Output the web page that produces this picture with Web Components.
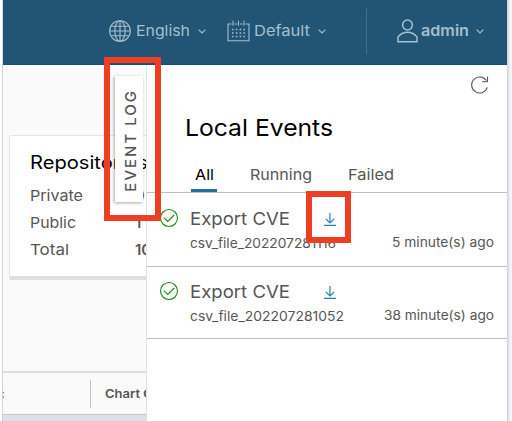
<!DOCTYPE html>
<html lang="en"><head><meta charset="utf-8"><title>Event Log</title>
<style>html,body{margin:0;width:512px;height:421px;overflow:hidden;background:#fff}body{font-family:Inter,"Liberation Sans",sans-serif;color:#565656}</style>
</head><body>
<app-shell></app-shell>
<script>
const define = (name, html, init) => customElements.define(name, class extends HTMLElement {
  connectedCallback() {
    if (this.shadowRoot) return;
    const t = document.createElement('template');
    t.innerHTML = typeof html === 'function' ? html(this) : html;
    this.attachShadow({mode:'open'}).append(t.content.cloneNode(true));
    if (init) init(this);
  }
});

// One line of text stretched horizontally to fill the width in "w".
define('fit-text', el => `<style>:host{display:block;white-space:nowrap;flex:none;width:${el.getAttribute('w')}px}span{display:inline-block;transform-origin:0 50%}</style><span><slot></slot></span>`, el => {
  const s = el.shadowRoot.querySelector('span');
  s.style.transform = `scaleX(${(+el.getAttribute('w') + 1) / s.getBoundingClientRect().width})`;
});

const icons = {
  globe: [22,22,'<circle cx="11" cy="11" r="10.3"/><ellipse cx="11" cy="11" rx="5.2" ry="10.3"/><path d="M11 .7v20.6M.7 11h20.6M2.3 6.3h17.4M2.3 15.7h17.4"/>'],
  calendar: [23,22,'<path d="M4.5 4H1v16.8h21V4h-3.500M7.500 4h2.500M13 4h2.500M6 .8v5M11.500 .8v5M17 .8v5"/><path stroke-dasharray="1.500 2.300" stroke-width="1.500" d="M5 9.500h13.500M5 13h13.500M5 16.500h13.500"/>'],
  user: [21,24,'<circle cx="10.500" cy="6" r="4.900"/><path d="M1 22.700V18c2.300-3 5.600-4.800 9.500-4.800s7.200 1.800 9.500 4.800v4.700z"/>'],
  caret: [8,5,'<path d="M.6.6 4 4 7.400.6"/>'],
  refresh: [18,18,'<path d="M16.300 11.300A8 8 0 1 1 15.300 4.500M16.500 .5v5.300h-5.300"/>'],
  check: [20,20,'<circle cx="10" cy="10" r="8.500"/><path d="M4.800 9.700 8.700 13.500 15.200 7"/>'],
  download: [12,13,'<path d="M6 0v9.800M1.800 5.800 6 10l4.200-4.200M0 12.400h12"/>']
};
define('ui-icon', el => {
  const [w,h,p] = icons[el.getAttribute('name')];
  return `<style>:host{display:block;flex:none;width:${w}px;height:${h}px}svg{display:block;fill:none;stroke:currentColor;stroke-width:var(--stroke,1.100)}</style><svg width="${w}" height="${h}" viewBox="0 0 ${w} ${h}">${p}</svg>`;
});

define('top-bar', `<style>
:host{display:flex;align-items:center;box-sizing:border-box;height:65px;padding:0 0 2px 106px;background:#225475;border-bottom:1px solid #0f5073;color:#a6bfcd;font-size:15px;line-height:22px}
.sep{width:1px;height:45px;background:#467089;margin-left:40px}
ui-icon[name=user]{--stroke:1.500}
</style>
<ui-icon name="globe"></ui-icon><fit-text w="53" style="margin-left:5px">English</fit-text><ui-icon name="caret" style="margin-left:9px"></ui-icon>
<ui-icon name="calendar" style="margin-left:21px"></ui-icon><fit-text w="55" style="margin-left:4px">Default</fit-text><ui-icon name="caret" style="margin-left:9px"></ui-icon>
<div class="sep"></div><ui-icon name="user" style="margin-left:30px"></ui-icon><fit-text w="47" style="margin-left:3px;font-weight:600">admin</fit-text><ui-icon name="caret" style="margin-left:8px"></ui-icon>`);

define('repo-card', `<style>
:host{display:block;box-sizing:border-box;width:160px;height:145px;padding:14px 0 0 20px;background:#fff;border:1px solid #e4e4e4;border-bottom:4px solid #dedede;border-radius:3px}
.title{font-size:18px;line-height:26px;color:#000}
.row{display:grid;grid-template-columns:105px 1fr;font-size:15px;line-height:27px}
.title + .row{margin-top:6px}b{font-weight:600}
</style><div class="title"><fit-text w="117">Repositories</fit-text></div>
<div class="row"><fit-text w="52">Private</fit-text><b>9</b></div>
<div class="row"><fit-text w="45">Public</fit-text><b>1</b></div>
<div class="row"><fit-text w="38">Total</fit-text><b>10</b></div>`);

define('column-heads', `<style>
:host{display:flex;align-items:center;box-sizing:border-box;height:44px;border-top:2px solid #dcdcdc;border-bottom:1px solid #c6c8ca;font-size:12px;font-weight:600;line-height:18px;white-space:nowrap}
span{flex:none;width:88px;margin-left:-2px}i{flex:none;width:1px;height:28px;background:#c4c4c4;margin-right:14px;margin-left:1px}
</style><span>:</span><i></i><fit-text w="34">Chart</fit-text><fit-text w="42" style="margin-left:4px">Count</fit-text>`);

define('event-tab', `<style>
:host{display:block;box-sizing:border-box;padding:0 4px;line-height:29px;margin-right:29px;border-bottom:3px solid transparent;font-size:15px}
:host([active]){color:#000;border-color:#2272a4}
</style><slot></slot>`);

define('event-item', `<style>
:host{display:grid;grid-template-columns:31px 1fr auto;box-sizing:border-box;border-bottom:1px solid #bfbfbf;padding:12px 14px 0 12px}
.status{color:#168a16;margin-top:2px}.name{display:flex;align-items:center;font-size:17.500px;line-height:26px}
.name ui-icon{color:#2f80ad;margin:0 0 0 35px;--stroke:1.200}.file{font-size:13px;line-height:22px;white-space:nowrap}
.time{font-size:13px;line-height:22px;margin-top:25px}
</style><ui-icon class="status" name="check"></ui-icon>
<div class="body"><div class="name"><fit-text w="99">Export CVE</fit-text><ui-icon name="download"></ui-icon></div><div class="file"><slot></slot></div></div>
<div class="time"><slot name="time"></slot></div>`);

define('event-panel', `<style>
:host{display:block;box-sizing:border-box;background:#fff;border-left:1px solid #e1e3e5}
.tools{height:40px;display:flex;justify-content:flex-end;align-items:center;padding-right:18px;box-sizing:border-box}
h2{font-size:23.500px;font-weight:400;line-height:30px;color:#000;margin:8px 0 0 38px}
nav{display:flex;align-items:flex-end;height:49px;border-bottom:1px solid #bfbfbf;padding-left:44px}
</style><div class="tools"><ui-icon name="refresh"></ui-icon></div>
<h2><fit-text w="147">Local Events</fit-text></h2>
<nav><event-tab active><fit-text w="18">All</fit-text></event-tab><event-tab><fit-text w="61">Running</fit-text></event-tab><event-tab><fit-text w="45">Failed</fit-text></event-tab></nav>
<event-item style="height:74px;padding-top:13px"><fit-text w="145">csv_file_202207281116</fit-text><fit-text slot="time" w="101">5 minute(s) ago</fit-text></event-item>
<event-item style="height:72px"><fit-text w="153">csv_file_202207281052</fit-text><fit-text slot="time" w="109">38 minute(s) ago</fit-text></event-item>`);

define('log-handle', `<style>
:host{display:flex;align-items:center;justify-content:center;box-sizing:border-box;width:28px;height:126px;background:#fff;box-shadow:-1px 1px 3px #0005;font-size:15px;font-weight:500;line-height:20px}
div{writing-mode:vertical-rl;transform:translate(2px,1px) rotate(180deg);letter-spacing:2px;white-space:nowrap}
</style><div><slot></slot></div>`);

define('mark-box', `<style>:host{display:block;box-sizing:border-box;border:6px solid #ee3f24}</style>`);

define('app-shell', `<style>
:host{display:grid;grid-template-columns:3px 504px 5px;width:512px;height:421px;overflow:hidden;position:relative}
.l{background:linear-gradient(90deg,#fff 0 2px,#ccd5dd 2px)}.r{background:linear-gradient(90deg,#d4d7e0 0 1px,#e9ebf1 2px,#f5f6fa 4px)}
.app{display:grid;grid-template-rows:65px 356px;min-width:0}
.stage{display:grid;grid-template-columns:143px 361px;overflow:hidden}
main{display:flex;flex-direction:column;background:#fafafa;overflow:hidden;min-width:0}
repo-card{margin:70px 0 0 6px}column-heads{margin-top:91px}footer{flex:1;background:#dae1e8}
log-handle,mark-box{position:absolute}
log-handle{left:115px;top:76px}
.a{left:104px;top:57px;width:57px;height:164px}.b{left:306px;top:191px;width:45px;height:52px}
</style><div class="l"></div><div class="app"><top-bar></top-bar><div class="stage"><main><repo-card></repo-card><column-heads></column-heads><footer></footer></main><event-panel></event-panel></div></div><div class="r"></div>
<log-handle>EVENT LOG</log-handle><mark-box class="a"></mark-box><mark-box class="b"></mark-box>`);
</script></body></html>
